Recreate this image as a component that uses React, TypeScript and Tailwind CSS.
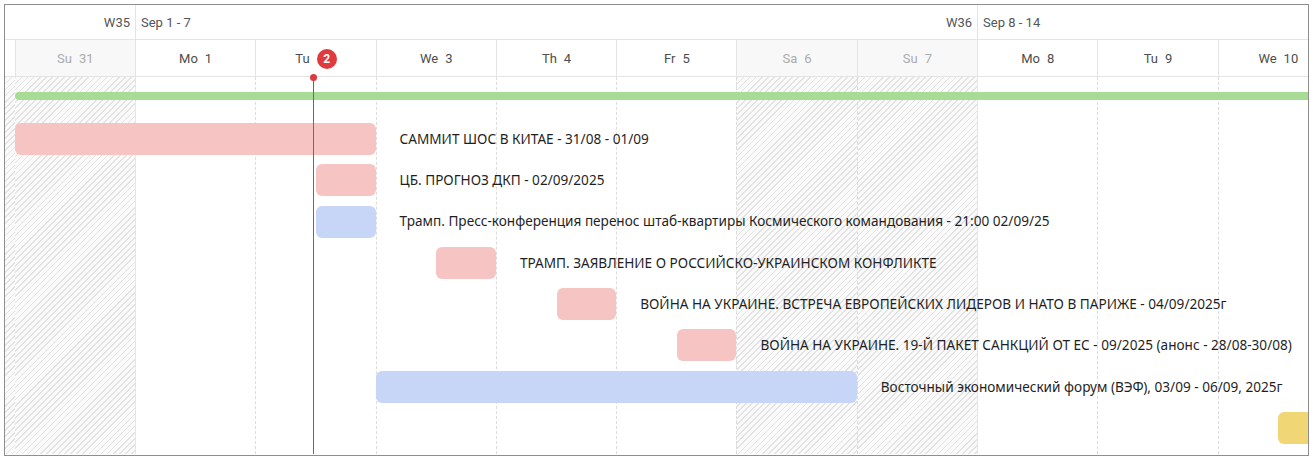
import React from "react";

interface Day {
  wd: string;
  num: string;
  weekend?: boolean;
  today?: boolean;
  weekStart?: boolean;
}

interface Task {
  start: number;
  end: number;
  color: string;
  label: string;
}

const DAY_W = 120.3;
const LEAD = 9.7;

const days: Day[] = [
  { wd: "Su", num: "31", weekend: true },
  { wd: "Mo", num: "1", weekStart: true },
  { wd: "Tu", num: "2", today: true },
  { wd: "We", num: "3" },
  { wd: "Th", num: "4" },
  { wd: "Fr", num: "5" },
  { wd: "Sa", num: "6", weekend: true },
  { wd: "Su", num: "7", weekend: true },
  { wd: "Mo", num: "8", weekStart: true },
  { wd: "Tu", num: "9" },
  { wd: "We", num: "10" },
];

const tasks: Task[] = [
  { start: 0, end: 3, color: "bg-[#f7c4c4]", label: "САММИТ ШОС В КИТАЕ - 31/08 - 01/09" },
  { start: 2.5, end: 3, color: "bg-[#f7c4c4]", label: "ЦБ. ПРОГНОЗ ДКП - 02/09/2025" },
  {
    start: 2.5,
    end: 3,
    color: "bg-[#c7d5f6]",
    label: "Трамп. Пресс-конференция перенос штаб-квартиры Космического командования - 21:00 02/09/25",
  },
  { start: 3.5, end: 4, color: "bg-[#f7c4c4]", label: "ТРАМП. ЗАЯВЛЕНИЕ О РОССИЙСКО-УКРАИНСКОМ КОНФЛИКТЕ" },
  {
    start: 4.5,
    end: 5,
    color: "bg-[#f7c4c4]",
    label: "ВОЙНА НА УКРАИНЕ. ВСТРЕЧА ЕВРОПЕЙСКИХ ЛИДЕРОВ И НАТО В ПАРИЖЕ - 04/09/2025г",
  },
  {
    start: 5.5,
    end: 6,
    color: "bg-[#f7c4c4]",
    label: "ВОЙНА НА УКРАИНЕ. 19-Й ПАКЕТ САНКЦИЙ ОТ ЕС - 09/2025 (анонс - 28/08-30/08)",
  },
  { start: 3, end: 7, color: "bg-[#c7d5f6]", label: "Восточный экономический форум (ВЭФ), 03/09 - 06/09, 2025г" },
  { start: 10.5, end: 11, color: "bg-[#f1d675]", label: "" },
];

const hatch =
  "bg-[repeating-linear-gradient(135deg,#e3e3e3_0px,#e3e3e3_1.2px,#fafafa_1.2px,#fafafa_4.3px)]";

export default function App() {
  // current time marker, in days from the first column
  const nowOffset = 2.48;
  const nowX = Math.round(LEAD + nowOffset * DAY_W - 0.5);

  return (
    <main className="w-[1313px] h-[460px] bg-white p-1 font-['Roboto',sans-serif]">
      <div className="relative h-full border border-[#8e8e8e] overflow-hidden bg-white">
        {/* Week row */}
        <div className="flex h-[35px] border-b border-[#e4e4e4] text-[13px] text-[#555]">
          <div className="w-[130px] shrink-0 flex items-center justify-end pr-[5px] pt-px">W35</div>
          <div className="w-[842.1px] shrink-0 flex items-center justify-between border-l border-[#e4e4e4] pl-[5px] pr-[5px] pt-px">
            <span>Sep 1 - 7</span>
            <span>W36</span>
          </div>
          <div className="flex-1 flex items-center border-l border-[#e4e4e4] pl-[5px] pt-px">
            <span>Sep 8 - 14</span>
          </div>
        </div>

        {/* Day row */}
        <div className="flex h-[37px] border-b border-[#e4e4e4] text-[13px]">
          <div className="w-[9.7px] shrink-0" />
          {days.map((d, i) => (
            <div
              key={i}
              className={`w-[120.3px] shrink-0 flex items-center justify-center gap-[7px] border-l border-[#e4e4e4] pt-px ${
                d.weekend ? "bg-[#f8f8f8] text-[#ababab]" : "text-[#4d4d4d]"
              }`}
            >
              <span>{d.wd}</span>
              {d.today ? (
                <span className="w-5 h-5 rounded-full bg-[#e03a3e] text-white text-[12px] font-bold flex items-center justify-center">
                  {d.num}
                </span>
              ) : (
                <span>{d.num}</span>
              )}
            </div>
          ))}
        </div>

        {/* Timeline body */}
        <div className="relative h-[377px]">
          <div className="absolute inset-0 flex">
            <div className={`w-[9.7px] shrink-0 ${hatch}`} />
            {days.map((d, i) => (
              <div
                key={i}
                className={`w-[120.3px] shrink-0 ${d.weekend ? hatch : ""} ${
                  i === 0 ? "" : d.weekStart ? "border-l border-[#e6e6e6]" : "border-l border-dashed border-[#dcdcdc]"
                }`}
              />
            ))}
          </div>

          <div className="relative flex flex-col pt-[15px]">
            <div className="h-2 ml-[10px] mr-[-20px] rounded-full bg-[#a8dc94]" />

            <div className="flex flex-col gap-[9.3px] mt-[23px]">
              {tasks.map((t, i) => (
                <div key={i} className="flex items-center h-8 shrink-0">
                  <div
                    className={`h-8 shrink-0 rounded-md ${t.color}`}
                    style={{
                      marginLeft: LEAD + t.start * DAY_W + 0.5,
                      width: (t.end - t.start) * DAY_W - 0.5,
                    }}
                  />
                  {t.label && (
                    <span className="ml-6 whitespace-nowrap text-[13.6px] text-[#1f1f1f] font-['Noto_Sans',sans-serif]">
                      {t.label}
                    </span>
                  )}
                </div>
              ))}
            </div>
          </div>

          {/* now marker */}
          <div className="absolute top-0 bottom-0 w-px bg-[#d83b40]" style={{ left: nowX }}>
            <div className="absolute -top-[3px] -left-[3px] w-[7px] h-[7px] rounded-full bg-[#d83b40]" />
          </div>
        </div>
      </div>
    </main>
  );
}
